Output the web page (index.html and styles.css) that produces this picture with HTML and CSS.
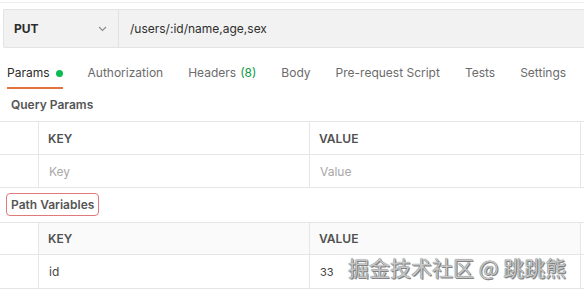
FILE: index.html
```html
<!DOCTYPE html>
<html>
<head>
<meta charset="utf-8">
<link rel="stylesheet" href="styles.css">
</head>
<body>
<div class="page">
  <div class="topline"></div>
  <div class="urlbar">
    <div class="method">
      <span class="method-name">PUT</span>
      <svg class="chev" width="9" height="6" viewBox="0 0 9 6"><path d="M1 1 L4.5 4.5 L8 1" fill="none" stroke="#8a8a8a" stroke-width="1.1"/></svg>
    </div>
    <div class="url">/users/:id/name,age,sex</div>
  </div>
  <div class="tabs">
    <div class="tab active">Params <span class="dot"></span></div>
    <div class="tab">Authorization</div>
    <div class="tab">Headers <span class="count">(8)</span></div>
    <div class="tab">Body</div>
    <div class="tab">Pre-request Script</div>
    <div class="tab">Tests</div>
    <div class="tab">Settings</div>
  </div>
  <div class="section-title">Query Params</div>
  <div class="table">
    <div class="cell lead"></div>
    <div class="cell head">KEY</div>
    <div class="cell head">VALUE</div>
    <div class="cell tail"></div>
    <div class="cell lead"></div>
    <div class="cell ph">Key</div>
    <div class="cell ph">Value</div>
    <div class="cell tail"></div>
  </div>
  <div class="pv-wrap"><span class="pv">Path Variables</span></div>
  <div class="table t2">
    <div class="cell lead"></div>
    <div class="cell head shade">KEY</div>
    <div class="cell head shade">VALUE</div>
    <div class="cell tail"></div>
    <div class="cell lead row2"></div>
    <div class="cell val row2">id</div>
    <div class="cell val num row2">33</div>
    <div class="cell tail row2"></div>
  </div>
  <div class="watermark">掘金技术社区 @ 跳跳熊</div>
</div>
</body>
</html>
```
FILE: styles.css
```css
* { box-sizing: border-box; }
body {
  margin: 0;
  background: #fff;
  font-family: Inter, "Noto Sans", sans-serif;
  color: #333;
}
.page {
  position: relative;
  width: 584px;
  height: 290px;
  overflow: hidden;
}
.topline {
  height: 1px;
  margin-top: 2px;
  background: #ececec;
}
.urlbar {
  margin: 6px 0 0 3px;
  height: 39px;
  background: #f2f2f2;
  border: 1px solid #e3e3e3;
  border-right: none;
  border-radius: 2px 0 0 2px;
  display: flex;
  align-items: stretch;
}
.method {
  width: 115px;
  border-right: 1px solid #e2e2e2;
  display: flex;
  align-items: center;
  justify-content: space-between;
  padding: 0 11px 0 10px;
}
.method-name {
  font-weight: 700;
  font-size: 12px;
  color: #2b2b2b;
}
.chev { display: block; margin-top: 1px; }
.url {
  display: flex;
  align-items: center;
  padding-left: 11px;
  font-size: 12px;
  color: #2e2e2e;
}
.tabs {
  display: flex;
  gap: 25px;
  padding-left: 7px;
  margin-top: 10px;
}
.tab {
  padding: 6px 0 5px;
  line-height: 18px;
  font-size: 12px;
  color: #6b6b6b;
  border-bottom: 2px solid transparent;
  display: flex;
  align-items: center;
  white-space: nowrap;
}
.tab.active {
  color: #2b2b2b;
  border-bottom-color: #e0733e;
}
.dot {
  display: inline-block;
  width: 7px;
  height: 7px;
  border-radius: 50%;
  background: #0cbb52;
  margin-left: 6px;
}
.count { color: #0a9b46; margin-left: 4px; }
.section-title {
  padding: 8px 0 8px 11px;
  line-height: 16px;
  font-size: 12px;
  font-weight: 600;
  color: #555;
}
.table {
  display: grid;
  grid-template-columns: 39px 271px 271px 3px;
  grid-auto-rows: 33px;
  border-top: 1px solid #e6e6e6;
}
.cell {
  border-bottom: 1px solid #e6e6e6;
  border-right: 1px solid #e6e6e6;
  display: flex;
  align-items: center;
  padding-left: 9px;
  font-size: 12px;
}
.cell.tail { border-right: none; padding: 0; }
.cell.lead { padding: 0; }
.head { font-weight: 600; color: #505050; }
.ph { color: #a8a8a8; padding-left: 10px; }
.shade { background: #fafafa; }
.t2 { grid-template-rows: 32px 34px; }
.val { color: #444; padding-left: 10px; }
.num { font-size: 11px; }
.pv-wrap {
  padding: 5px 0 6px 6px;
}
.pv {
  display: inline-block;
  border: 1px solid #e07a7a;
  border-radius: 4px;
  padding: 3px 4px 3px 4px;
  line-height: 15px;
  font-size: 12px;
  font-weight: 600;
  color: #555;
}
.watermark {
  position: absolute;
  left: 348px;
  top: 254px;
  font-family: "Noto Sans CJK SC", sans-serif;
  font-size: 21px;
  line-height: 26px;
  color: #c6c6c6;
  text-shadow: 0 0 1px #4a4a4a, 1px 1px 0 #8a8a8a;
  white-space: nowrap;
}
```
